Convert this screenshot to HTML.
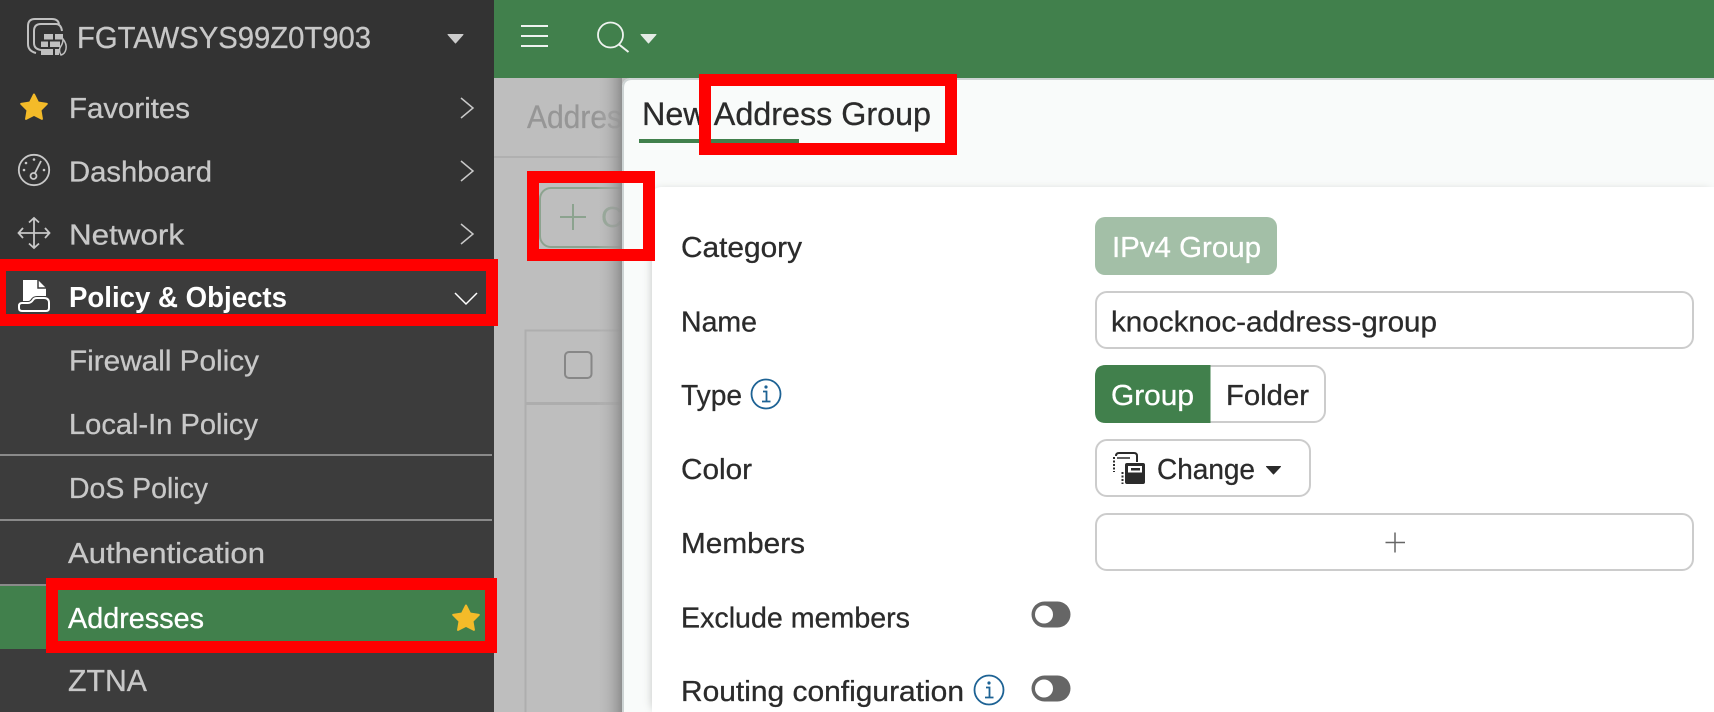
<!DOCTYPE html>
<html><head><meta charset="utf-8"><title>New Address Group</title>
<style>html,body{margin:0;padding:0;background:#fff;width:1714px;height:712px;overflow:hidden}svg{display:block}text{font-family:"Liberation Sans",sans-serif;font-size:29px;stroke-width:.3px}.l{fill:#c8c8c8;stroke:#c8c8c8}.d{fill:#2b2b2b;stroke:#2b2b2b}.w{fill:#fff;stroke:#fff}</style></head>
<body>
<svg width="1714" height="712" viewBox="0 0 1714 712" xmlns="http://www.w3.org/2000/svg">
<defs>
<linearGradient id="s1" x1="0" x2="1" y1="0" y2="0"><stop offset="0" stop-color="#bebebe" stop-opacity="0"/><stop offset="0.5" stop-color="#a8a8a8" stop-opacity=".5"/><stop offset="1" stop-color="#8e8e8e"/></linearGradient>
<filter id="cs" x="-5%" y="-5%" width="110%" height="110%"><feGaussianBlur stdDeviation="4.500"/></filter>
</defs>
<!-- background -->
<rect x="494" y="78" width="1220" height="634" fill="#bebebe"/>
<rect x="494" y="0" width="1220" height="78" fill="#41804c"/>
<!-- sidebar -->
<rect x="0" y="0" width="494" height="712" fill="#3c3c3c"/>
<rect x="0" y="0" width="494" height="259" fill="#333333"/>
<rect x="0" y="584" width="494" height="65" fill="#41804c"/>
<rect x="0" y="584" width="60" height="2" fill="#8a8a8a"/>
<rect x="0" y="454" width="492" height="2" fill="#8a8a8a"/>
<rect x="0" y="519" width="492" height="2" fill="#8a8a8a"/>
<g fill="none" stroke="#c0c0c0" stroke-width="2">
<path d="M36 53Q28 51 28 44V26Q28 19 35 19H52Q58 19 59 24"/>
<path d="M41 50Q34 49 34 43V31Q34 24 41 24H56Q61 24 62 31"/>
</g>
<g fill="#c0c0c0">
<rect x="44" y="34" width="9" height="5.500"/><rect x="55" y="34" width="8" height="5.500"/>
<rect x="41" y="41.500" width="7" height="5.500"/><rect x="50" y="41.500" width="10" height="5.500"/>
<rect x="41" y="49" width="12" height="6"/><rect x="55" y="49" width="4" height="6"/>
</g>
<path d="M63 39Q67 44 66 49Q65 54 61 55Q58 50 61 46Q63 43 63 39Z" fill="none" stroke="#c0c0c0" stroke-width="1.500"/>
<text x="77" y="48" style="font-size:30.500px" textLength="294" lengthAdjust="spacingAndGlyphs" class="l">FGTAWSYS99Z0T903</text>
<path d="M448 34.500H463L455.500 43Z" fill="#cccccc" stroke="#cccccc" stroke-width="1" stroke-linejoin="round"/>
<polygon transform="translate(34 108)" points="0,-13.500 4,-5.500 12.840,-4.170 6.470,2.100 7.940,10.920 0,6.800 -7.940,10.920 -6.470,2.100 -12.840,-4.170 -4,-5.500" fill="#f4bb29" stroke="#f4bb29" stroke-width="2" stroke-linejoin="round"/>
<text x="69" y="118" textLength="121" lengthAdjust="spacingAndGlyphs" class="l">Favorites</text>
<g fill="none" stroke="#c8c8c8" stroke-width="1.500">
<path d="M461 98L473 108L461 118"/><path d="M461 161L473 171L461 181"/><path d="M461 224L473 234L461 244"/>
<path d="M455 293L466 304L477 293" stroke="#ffffff"/>
</g>
<g fill="none" stroke="#c8c8c8" stroke-width="1.800">
<circle cx="34" cy="170" r="15.200"/>
<circle cx="33.500" cy="176" r="3"/>
<path d="M35 173L41 161"/>
<path d="M19 233H49M34 218V248M23 228L18.500 233L23 238M45 228L49.500 233L45 238M29 222.500L34 218L39 222.500M29 243.500L34 248L39 243.500"/>
</g>
<g fill="#c8c8c8"><circle cx="24" cy="170" r="1.300"/><circle cx="26" cy="163" r="1.300"/><circle cx="34" cy="159.500" r="1.300"/><circle cx="44" cy="170" r="1.300"/></g>
<text x="69" y="181.500" textLength="143" lengthAdjust="spacingAndGlyphs" class="l">Dashboard</text>
<text x="69" y="244.500" textLength="115" lengthAdjust="spacingAndGlyphs" class="l">Network</text>
<!-- policy row -->
<path d="M23 280H38L46 288V296H37Q33 296 31 299Q30 301 28 301H23Z" fill="#ffffff"/>
<path d="M38 280V288H46" fill="none" stroke="#3c3c3c" stroke-width="1.500"/>
<path d="M19 306Q19 303 22 303H28Q31 303 33 300Q34 298 37 298H44Q49 298 49 303V308Q49 311 46 311H22Q19 311 19 308Z" fill="none" stroke="#ffffff" stroke-width="2"/>
<text x="69" y="307" textLength="218" lengthAdjust="spacingAndGlyphs" fill="#ffffff" font-weight="700">Policy &amp; Objects</text>
<text x="69" y="370.500" textLength="190" lengthAdjust="spacingAndGlyphs" class="l">Firewall Policy</text>
<text x="69" y="434" textLength="189" lengthAdjust="spacingAndGlyphs" class="l">Local-In Policy</text>
<text x="69" y="498" textLength="139" lengthAdjust="spacingAndGlyphs" class="l">DoS Policy</text>
<text x="68" y="563" textLength="197" lengthAdjust="spacingAndGlyphs" class="l">Authentication</text>
<text x="68" y="628" textLength="136" lengthAdjust="spacingAndGlyphs" class="w">Addresses</text>
<polygon transform="translate(466 619)" points="0,-13.500 4,-5.500 12.840,-4.170 6.470,2.100 7.940,10.920 0,6.800 -7.940,10.920 -6.470,2.100 -12.840,-4.170 -4,-5.500" fill="#f4bb29" stroke="#f4bb29" stroke-width="2" stroke-linejoin="round"/>
<text x="68" y="691" style="font-size:30.500px" textLength="79" lengthAdjust="spacingAndGlyphs" class="l">ZTNA</text>
<!-- top bar icons -->
<path d="M521 26H548M521 36H548M521 46H548" stroke="#eef3ef" stroke-width="2" fill="none"/>
<circle cx="610.500" cy="35" r="12.500" fill="none" stroke="#eef3ef" stroke-width="1.800"/>
<path d="M619 44.500L628.500 52" stroke="#eef3ef" stroke-width="2" fill="none"/>
<path d="M641 34.500H656L648.500 43Z" fill="#e4ebe5" stroke="#e4ebe5" stroke-width="1" stroke-linejoin="round"/>
<!-- page behind modal -->
<text x="527" y="128" style="font-size:32px" fill="#969696" stroke="#969696" textLength="110" lengthAdjust="spacingAndGlyphs">Address</text>
<rect x="494" y="156" width="130" height="2" fill="#b0b0b0"/>
<rect x="540" y="188" width="100" height="59" rx="11" fill="none" stroke="#8ca38f" stroke-width="2"/>
<path d="M573 204V230M560 217H586" stroke="#8ca38f" stroke-width="2" fill="none"/>
<text x="601" y="227" fill="#8ca38f" stroke="#8ca38f" textLength="22" lengthAdjust="spacingAndGlyphs">C</text>
<path d="M525.500 712V330.500H624" fill="none" stroke="#aeaeae" stroke-width="2"/>
<rect x="526" y="402" width="98" height="3" fill="#adadad"/>
<rect x="565" y="352" width="26.500" height="26" rx="4" fill="none" stroke="#878787" stroke-width="2"/>
<rect x="596" y="78" width="26" height="634" fill="url(#s1)"/>
<!-- modal -->
<path d="M622 712V88Q622 78 632 78H1714V712Z" fill="#f9fbfa"/>
<path d="M623 712V88Q623 79 632 79H1714" fill="none" stroke="#cdd3d3" stroke-width="2"/>
<text x="642" y="125" style="font-size:32px" class="d" textLength="289" lengthAdjust="spacingAndGlyphs">New Address Group</text>
<rect x="639" y="139" width="160" height="4" fill="#41804c"/>
<!-- card -->
<rect x="652" y="190" width="1062" height="522" rx="10" fill="#000" fill-opacity=".22" filter="url(#cs)"/>
<path d="M652 712V197Q652 187 662 187H1714V712Z" fill="#ffffff"/>
<!-- form labels -->
<g>
<text class="d" x="681" y="257" textLength="121" lengthAdjust="spacingAndGlyphs">Category</text>
<text class="d" x="681" y="331.500" textLength="76" lengthAdjust="spacingAndGlyphs">Name</text>
<text class="d" x="681" y="405" textLength="61" lengthAdjust="spacingAndGlyphs">Type</text>
<text class="d" x="681" y="479" textLength="71" lengthAdjust="spacingAndGlyphs">Color</text>
<text class="d" x="681" y="553" textLength="124" lengthAdjust="spacingAndGlyphs">Members</text>
<text class="d" x="681" y="627.500" textLength="229" lengthAdjust="spacingAndGlyphs">Exclude members</text>
<text class="d" x="681" y="701" textLength="283" lengthAdjust="spacingAndGlyphs">Routing configuration</text>
</g>
<g fill="none" stroke="#1d6294" stroke-width="1.800">
<circle cx="766" cy="394" r="14.500"/><circle cx="989" cy="690" r="14.500"/>
<path d="M763 391.500H766.500V401.500M762 401.500H770.500M986 687.500H989.500V697.500M985 697.500H993.500"/>
</g>
<circle cx="766" cy="387" r="1.600" fill="#1d6294"/><circle cx="989" cy="683" r="1.600" fill="#1d6294"/>
<!-- category -->
<rect x="1095" y="217" width="182" height="58" rx="10" fill="#a3bfa7"/>
<text x="1112" y="257" textLength="149" lengthAdjust="spacingAndGlyphs" class="w">IPv4 Group</text>
<!-- name -->
<rect x="1096" y="292" width="597" height="56" rx="11" fill="#ffffff" stroke="#cccccc" stroke-width="2"/>
<text x="1111" y="331.500" textLength="326" lengthAdjust="spacingAndGlyphs" class="d">knocknoc-address-group</text>
<!-- type -->
<rect x="1096" y="366" width="229" height="56" rx="11" fill="#ffffff" stroke="#cccccc" stroke-width="2"/>
<path d="M1210.500 365V423H1106Q1095 423 1095 412V376Q1095 365 1106 365Z" fill="#41804c"/>
<text x="1111" y="405" textLength="83" lengthAdjust="spacingAndGlyphs" class="w">Group</text>
<text x="1226" y="405" textLength="83" lengthAdjust="spacingAndGlyphs" class="d">Folder</text>
<!-- color -->
<rect x="1096" y="440" width="214" height="56" rx="11" fill="#ffffff" stroke="#cccccc" stroke-width="2"/>
<path d="M1116 456Q1116 453 1119 453H1134Q1137 453 1137 456V462" fill="none" stroke="#2b2b2b" stroke-width="2"/>
<path d="M1117 458H1130" stroke="#2b2b2b" stroke-width="1.500"/>
<path d="M1114 457V472" stroke="#2b2b2b" stroke-width="2" stroke-dasharray="2 1.500"/>
<path d="M1125 465Q1125 463 1127 463H1143Q1145 463 1145 465V482Q1145 484 1143 484H1127Q1125 484 1125 482Z" fill="#2b2b2b"/>
<rect x="1128" y="466" width="14" height="6.500" fill="#ffffff"/>
<rect x="1131" y="468" width="9" height="2.500" fill="#2b2b2b"/>
<path d="M1122.500 472V484" stroke="#2b2b2b" stroke-width="2" stroke-dasharray="2 1.500"/>
<text x="1157" y="479" textLength="98" lengthAdjust="spacingAndGlyphs" class="d">Change</text>
<path d="M1266.500 466.500H1280.500L1273.500 474Z" fill="#2b2b2b" stroke="#2b2b2b" stroke-width="1" stroke-linejoin="round"/>
<!-- members -->
<rect x="1096" y="514" width="597" height="56" rx="11" fill="#ffffff" stroke="#cccccc" stroke-width="2"/>
<path d="M1395 532.500V552.500M1385.500 542.500H1405" stroke="#666666" stroke-width="1.500" fill="none"/>
<!-- toggles -->
<rect x="1031.500" y="601.500" width="39" height="26" rx="13" fill="#666666"/>
<circle cx="1044" cy="614.500" r="9" fill="#ffffff"/>
<rect x="1031.500" y="675.500" width="39" height="26" rx="13" fill="#666666"/>
<circle cx="1044" cy="688.500" r="9" fill="#ffffff"/>
<!-- red annotation boxes -->
<path fill="#ff0000" fill-rule="evenodd" d="M0 259H498V326H0ZM6 271V314H486V271Z"/>
<g fill="none" stroke="#ff0000" stroke-width="12">
<rect x="52" y="584" width="439" height="63"/>
<rect x="533" y="177" width="116" height="78"/>
<rect x="705" y="80" width="246" height="69"/>
</g>
</svg>
</body></html>
